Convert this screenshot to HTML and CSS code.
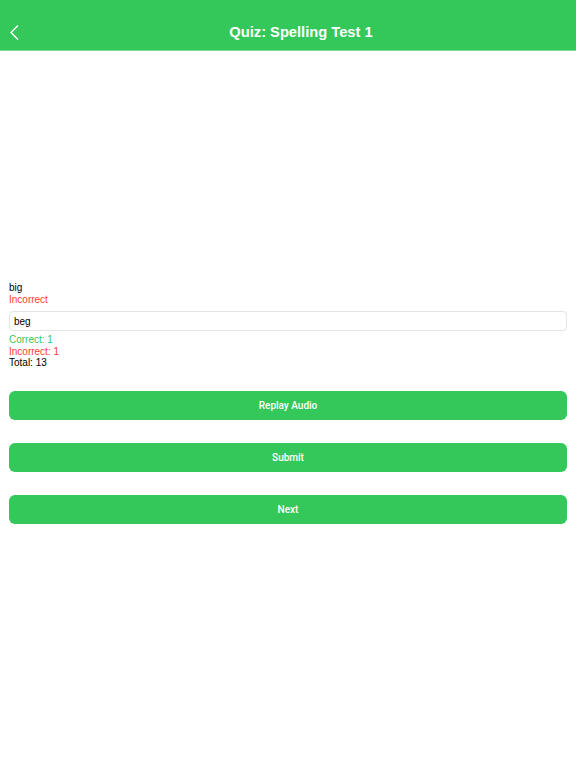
FILE: index.html
```html
<!doctype html>
<html lang="en">
    <head>
        <meta charset="UTF-8">
        <meta name="viewport" content="width=device-width, initial-scale=1.0">
        <title>Quiz: Spelling Test 1</title>
        <link rel="stylesheet" href="styles.css">
    </head>
    <body>
        <header class="nav-bar">
            <span class="back" aria-label="Back">
                <svg width="12" height="15" viewBox="0 0 12 15">
                    <path d="M9.5 1 L3 7.5 L9.5 14" fill="none" stroke="#fff" stroke-width="1.5" stroke-linecap="round" stroke-linejoin="round"/>
                </svg>
            </span>
            <h1 class="nav-title">Quiz: Spelling Test 1</h1>
        </header>
        <main class="quiz">
            <div class="word">big</div>
            <div class="result wrong">Incorrect</div>
            <input class="answer" type="text" value="beg">
            <div class="score right">Correct: 1</div>
            <div class="score wrong">Incorrect: 1</div>
            <div class="score">Total: 13</div>
            <div class="actions">
                <button class="btn">Replay Audio</button>
                <button class="btn">Submit</button>
                <button class="btn">Next</button>
            </div>
        </main>
    </body>
</html>
```

FILE: styles.css
```css
:root {
    --green: #34c759;
    --red: #ff3b30;
    --text: #000000;
}
* {
    box-sizing: border-box;
}
html {
    font-family: "Liberation Sans", Arial, sans-serif;
    font-size: 10px;
    color: var(--text);
    background-color: #fff;
}
body {
    margin: 0;
}
.nav-bar {
    display: flex;
    align-items: center;
    height: 51px;
    padding-top: 14px;
    background-color: var(--green);
    border-bottom: 1px solid #7fd996;
    color: #fff;
}
.back {
    width: 26px;
    display: flex;
    justify-content: center;
    padding-left: 1px;
}
.back svg {
    display: block;
}
.nav-title {
    flex: 1;
    margin: 0;
    text-align: center;
    font-size: 14.7px;
    font-weight: 700;
}
.quiz {
    padding: 231px 9px 0;
}
.word, .result, .score {
    line-height: 11.5px;
}
.right {
    color: var(--green);
}
.wrong {
    color: var(--red);
}
.answer {
    display: block;
    width: 100%;
    height: 20px;
    margin: 6px 0 3px;
    padding: 0 4px;
    border: 1px solid #e4e4e4;
    border-radius: 4px;
    font: inherit;
    color: var(--text);
    outline: none;
}
.actions {
    display: flex;
    flex-direction: column;
    gap: 23px;
    margin-top: 22px;
}
.btn {
    height: 29px;
    border: none;
    border-radius: 6px;
    background-color: var(--green);
    color: #fff;
    font-family: Roboto, "Liberation Sans", sans-serif;
    font-size: 10px;
    font-weight: 500;
    cursor: pointer;
}
```
